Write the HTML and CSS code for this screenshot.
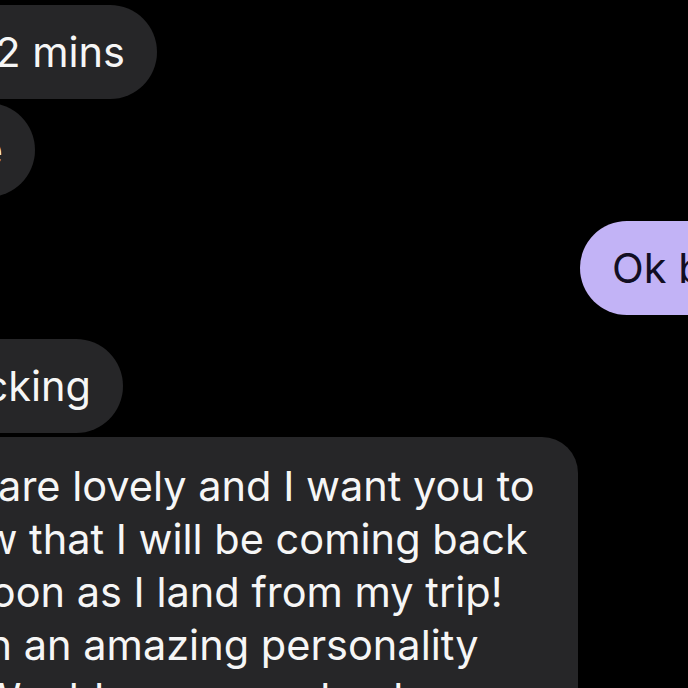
FILE: index.html
```html
<!DOCTYPE html>
<html>
<head>
<meta charset="utf-8">
<link rel="stylesheet" href="styles.css">
</head>
<body>
<main class="thread">
  <div class="row in r1"><div class="bubble gray first">I'll be there in 2 mins</div></div>
  <div class="row in r2"><div class="bubble gray">Come outside</div></div>
  <div class="row out"><div class="bubble lav">Ok bet see you soon</div></div>
  <div class="row in r3"><div class="bubble gray">Just checking</div></div>
  <div class="long bubble gray">
    <div class="line">You are lovely and I want you to</div>
    <div class="line">know that I will be coming back</div>
    <div class="line">as soon as I land from my trip!</div>
    <div class="line">Been an amazing personality</div>
    <div class="line">lol. Would you come back</div>
  </div>
</main>
</body>
</html>
```
FILE: styles.css
```css
html, body {
  margin: 0;
  padding: 0;
  background: #000;
  overflow: hidden;
  width: 688px;
  height: 688px;
}
.thread {
  display: flex;
  flex-direction: column;
  padding-top: 5px;
  font-family: Inter, "Noto Sans", sans-serif;
  font-size: 41.5px;
  color: #f6f6f6;
}
.row {
  display: flex;
  flex-shrink: 0;
}
.row.in { justify-content: flex-end; }
.r1 { width: 157px; }
.r2 { width: 35px; margin-top: 4px; }
.r3 { width: 123px; margin-top: 24px; }
.row.out { margin-top: 24px; padding-left: 580px; }
.bubble {
  white-space: nowrap;
  flex-shrink: 0;
  box-sizing: border-box;
}
.row .bubble {
  height: 94px;
  line-height: 94px;
  border-radius: 47px;
  padding: 0 32px;
}
.gray { background: #262628; }
.lav { background: #c2b3f6; color: #120e22; }
.long {
  margin-top: 4px;
  margin-left: -124px;
  width: 702px;
  height: 300px;
  border-radius: 36px 36px 0 0;
  padding: 23px 0 0 36px;
  line-height: 53px;
}
.line { white-space: nowrap; }
```
